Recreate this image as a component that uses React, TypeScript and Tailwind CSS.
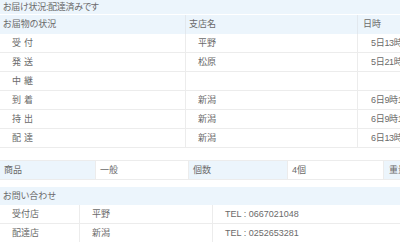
const statusRows = [
  { step: "受付", branch: "平野", time: "5日13時38分" },
  { step: "発送", branch: "松原", time: "5日21時24分" },
  { step: "中継", branch: "", time: "" },
  { step: "到着", branch: "新潟", time: "6日9時18分" },
  { step: "持出", branch: "新潟", time: "6日9時1分" },
  { step: "配達", branch: "新潟", time: "6日13時18分" },
];

const contacts = [
  { role: "受付店", branch: "平野", tel: "TEL : 0667021048" },
  { role: "配達店", branch: "新潟", tel: "TEL : 0252653281" },
];

export default function App() {
  return (
    <div className="h-[242px] w-[400px] overflow-hidden bg-white text-[9px] text-[#6a6a6a] [font-family:'Liberation_Sans','Noto_Sans_CJK_JP',sans-serif] [font-feature-settings:'palt']">
      <div className="w-[560px]">
        {/* delivery status */}
        <div className="h-[14px] bg-[#ecf5fc] pl-[3px] leading-[14px] tracking-[-0.3px]">お届け状況:配達済みです</div>
        <div className="mt-px grid h-[19px] grid-cols-[185px_172px_1fr] bg-[#ecf5fc] leading-[19px]">
          <div className="pl-[3px]">お届物の状況</div>
          <div className="border-l border-[#e2e8ee] pl-[3px]">支店名</div>
          <div className="border-l border-[#e2e8ee] pl-[5px]">日時</div>
        </div>
        {statusRows.map((r) => (
          <div
            key={r.step}
            className="grid h-[19px] grid-cols-[185px_172px_1fr] border-b border-[#ececec] leading-[18px]"
          >
            <div className="pl-[12px] tracking-[3px]">{r.step}</div>
            <div className="border-l border-[#ececec] pl-[12px]">{r.branch}</div>
            <div className="whitespace-nowrap border-l border-[#ececec] pl-[13px] tracking-[-0.3px]">{r.time}</div>
          </div>
        ))}

        {/* package info */}
        <div className="mt-[12px] flex h-[20px] border-y border-[#ececec] leading-[18px]">
          <div className="w-[95px] bg-[#ecf5fc] pl-[4px]">商品</div>
          <div className="w-[93px] border-l border-[#ececec] pl-[4px]">一般</div>
          <div className="w-[99px] border-l border-[#ececec] bg-[#ecf5fc] pl-[4px]">個数</div>
          <div className="w-[96px] border-l border-[#ececec] pl-[4px]">4個</div>
          <div className="w-[96px] border-l border-[#ececec] bg-[#ecf5fc] pl-[5px]">重量</div>
        </div>

        {/* contact */}
        <div className="mt-[7px] h-[18px] bg-[#ecf5fc] pl-[3px] leading-[18px]">お問い合わせ</div>
        {contacts.map((c) => (
          <div
            key={c.role}
            className="grid h-[19px] grid-cols-[79px_133px_1fr] border-b border-[#ececec] leading-[18px]"
          >
            <div className="pl-[12px]">{c.role}</div>
            <div className="border-l border-[#ececec] pl-[12px]">{c.branch}</div>
            <div className="border-l border-[#ececec] pl-[12px]">{c.tel}</div>
          </div>
        ))}
      </div>
    </div>
  );
}
